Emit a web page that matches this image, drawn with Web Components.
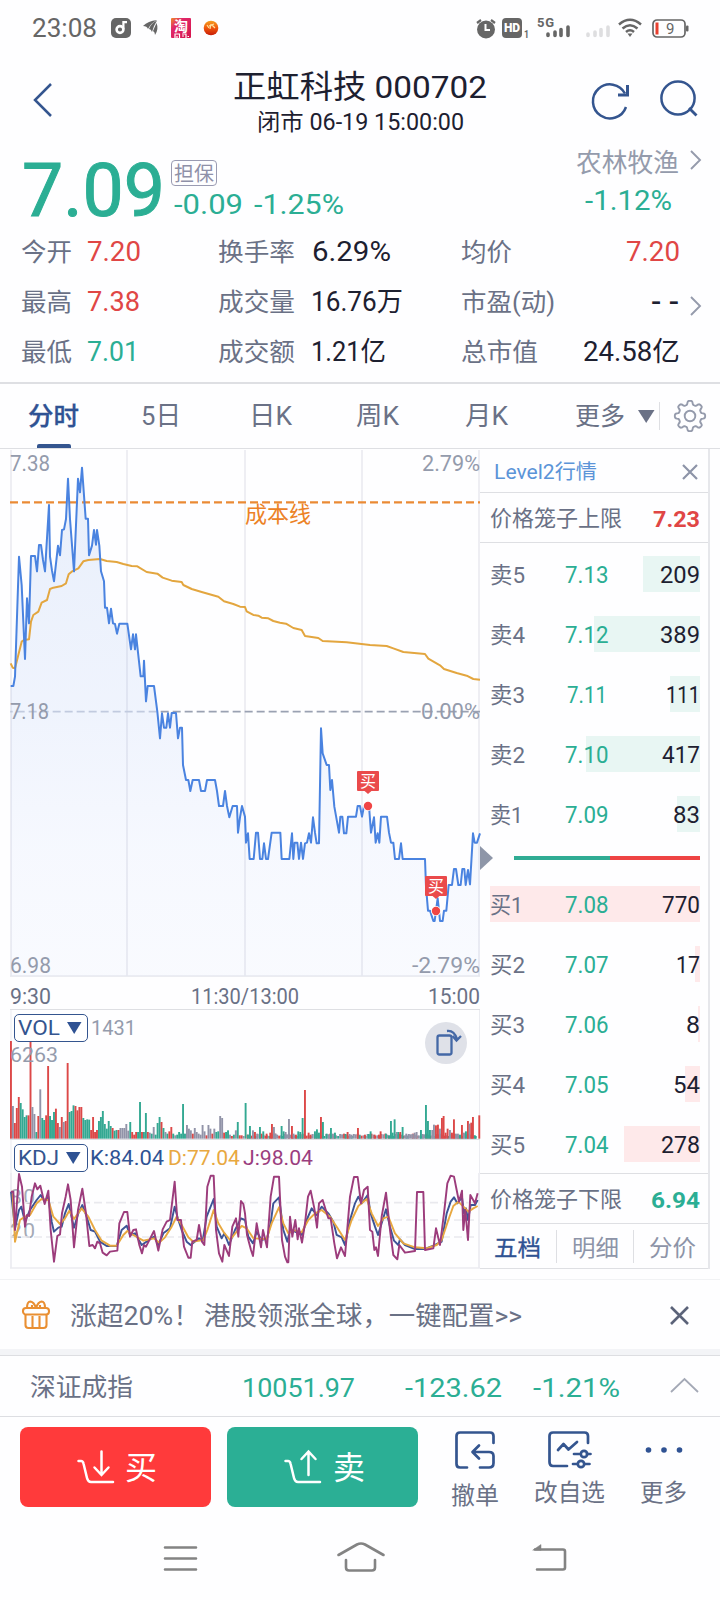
<!DOCTYPE html>
<html lang="zh-CN">
<head>
<meta charset="utf-8">
<title>正虹科技 000702</title>
<style>
html,body{margin:0;padding:0;background:#fefeff}
body{width:720px;height:1600px;overflow:hidden;font-family:Roboto,"Noto Sans CJK SC",sans-serif;color:#1d2030}
</style>
</head>
<body>
<stock-app></stock-app>
<script>
const define = (name, html, setup) => {
  const tpl = document.createElement('template');
  tpl.innerHTML = `<style>*{box-sizing:border-box}:host{display:flex;box-sizing:border-box}svg{display:block;flex:none;overflow:visible}.row{display:flex;align-items:center}.g{color:#2bae94}.r{color:#e04645}.l{color:#949bac}.b{color:#2f5293}.sp{flex:1}</style>` + html;
  customElements.define(name, class extends HTMLElement {
    connectedCallback() {
      if (this.shadowRoot) return;
      const root = this.attachShadow({mode: 'open'});
      root.appendChild(tpl.content.cloneNode(true));
      if (setup) setup(root, this);
    }
  });
};

/* Single line of text stretched to an exact width: s = font size, w = width */
customElements.define('fit-text', class extends HTMLElement {
  connectedCallback() {
    if (this.shadowRoot) return;
    const root = this.attachShadow({mode: 'open'});
    const s = +this.getAttribute('s'), w = +this.getAttribute('w');
    root.innerHTML = `<style>:host{display:block;flex:none;width:${w}px;height:${s}px;font-size:${s}px;line-height:${s}px}span{display:inline-block;white-space:nowrap;transform-origin:0 50%}</style><span><slot></slot></span>`;
    const span = root.querySelector('span');
    const nat = span.getBoundingClientRect().width;
    if (nat) span.style.transform = `scaleX(${w / nat})`;
  }
});

define('status-bar', `<style>:host{height:56px;align-items:center;padding-left:32px;color:#666}
.hd{width:20px;height:20px;background:#666;border-radius:4px;color:#fff;font:900 12px/20px Roboto;text-align:center}
</style>
<fit-text s="25" w="65">23:08</fit-text>
<svg style="margin-left:14px" width="20" height="20"><rect width="20" height="20" rx="5" fill="#666"/><circle cx="9" cy="11.5" r="3.4" fill="none" stroke="#fff" stroke-width="2.6"/><path d="M12.4 11V4.2H16" fill="none" stroke="#fff" stroke-width="2.2"/></svg>
<svg style="margin-left:12px" width="16" height="18"><path d="M0 7Q5 2 14 1Q8 4 5 10Q4 7 0 7ZM6 10Q8 4 14 1.500Q11 6 9 13Q8 10 6 10ZM10 12L13.500 4Q16 10 12 16Q12 13 10 12Z" fill="#666"/></svg>
<svg style="margin-left:12px" width="20" height="20"><defs><linearGradient id="t" x2="1" y2="1"><stop stop-color="#f08a2a"/><stop offset=".3" stop-color="#e0286a"/><stop offset="1" stop-color="#d6144c"/></linearGradient></defs><rect width="20" height="20" rx="1" fill="url(#t)"/><text x="3" y="12.500" font-family="Noto Sans CJK SC" font-weight="700" font-size="14" fill="#fff">淘</text><path d="M4 20V16H8.500V20M6 18V20M11 16H15V20M11 18H13M16.500 18.500H18" stroke="#fff" stroke-width="1.200" fill="none"/></svg>
<svg style="margin-left:12px" width="16" height="16"><defs><linearGradient id="o" x2="0" y2="1"><stop stop-color="#f5a020"/><stop offset=".5" stop-color="#f0560c"/><stop offset="1" stop-color="#c61c08"/></linearGradient></defs><circle cx="8" cy="8" r="7.300" fill="url(#o)"/><path d="M4 5L6 8M8 4L7 9M6 6L11 4M9 5L12 8" stroke="#ffe2a0" fill="none" stroke-width="1.2"/></svg>
<div class="sp"></div>
<svg width="20" height="21"><circle cx="10" cy="11.500" r="9" fill="#666"/><path d="M9.500 6V12H14" stroke="#fff" stroke-width="2" fill="none"/><path d="M1 5L5 2M19 5L15 2" stroke="#666" stroke-width="2.200"/></svg>
<div class="hd" style="margin-left:6px">HD</div>
<fit-text s="11" w="5" style="margin:12px 9px 0 2px;font-weight:700">1</fit-text>
<svg width="32" height="22"><text x="-1" y="10" font-family="Roboto" font-weight="700" font-size="13" fill="#666" textLength="17">5G</text><g stroke="#666" stroke-width="3.600" stroke-linecap="round"><path d="M10 17V18.500M17 15V18.500M23 12.500V18.500M30 10V18.500"/></g></svg>
<svg style="margin-left:16px" width="24" height="22"><g stroke="#dedee0" stroke-width="3.600" stroke-linecap="round"><path d="M2 17V18.500M9 15V18.500M15 12.500V18.500M22 10V18.500"/></g></svg>
<svg style="margin-left:8px" width="24" height="20"><g fill="none" stroke="#666" stroke-width="2.500"><path d="M1 6.500Q12-3 23 6.500M4.500 10.500Q12 4 19.500 10.500M8 14Q12 10.500 16 14"/></g><path d="M9.500 15.500H14.500L12 19Z" fill="#666"/></svg>
<svg style="margin:1px 31px 0 10px" width="37" height="19"><rect x="1" y="1" width="32" height="17" rx="4" fill="none" stroke="#666" stroke-width="1.700"/><rect x="3.500" y="3.500" width="3" height="12" fill="#e8402f"/><rect x="34" y="6.500" width="2.500" height="6" rx="1" fill="#666"/><text x="14" y="15" font-family="Roboto" font-size="15" fill="#666">9</text></svg>`);

define('stock-header', `<style>:host{height:87px;align-items:flex-start}
.mid{display:flex;flex-direction:column;align-items:center;gap:7px;padding:15px 10px 0 0;flex:1}
</style>
<svg style="margin:27px 0 0 33px" width="20" height="34"><path d="M18 1L2 17L18 33" fill="none" stroke="#34558f" stroke-width="2.500"/></svg>
<div style="width:84px"></div>
<div class="mid"><fit-text s="32" w="254">正虹科技 000702</fit-text><fit-text s="23" w="207" style="margin:1px 0 0 1px">闭市 06-19 15:00:00</fit-text></div>
<svg style="margin:25px 0 0" width="37" height="38"><g fill="none" stroke="#34558f" stroke-width="2.500"><path d="M34 26A17 17 0 1 1 33 12.500"/><path d="M35.500 4V14H26" stroke-width="3"/></g></svg>
<svg style="margin:24px 22px 0 31px" width="38" height="38"><circle cx="18" cy="18" r="16.600" fill="none" stroke="#34558f" stroke-width="2.500"/><path d="M29 28L36.500 35.500" stroke="#34558f" stroke-width="2.800"/></svg>`);

define('quote-panel', `<style>:host{flex-direction:column;height:241px;border-bottom:2px solid #dedfe3;position:relative}
.top{display:flex;height:84px}.badge{display:flex;align-items:center;justify-content:center;width:46px;height:26px;border:1.500px solid #9a9bb2;border-radius:4px;color:#8f90a8}
.grid{display:grid;grid-template-columns:197px 243px 1fr;}
.f{display:flex;align-items:center;height:50px}.f>:first-child{color:#6a7186}
.ar{position:absolute;left:690px;top:154px}
</style>
<div class="top">
<fit-text class="g" s="74" w="143" style="margin:11px 0 0 22px;-webkit-text-stroke:1px #2bae94">7.09</fit-text>
<div style="margin:17px 0 0 6px"><div class="badge"><fit-text s="20" w="40" style="margin-top:1px">担保</fit-text></div>
<div class="row g" style="margin:6px 0 0 3px"><fit-text s="27" w="69">-0.09</fit-text><fit-text s="27" w="90" style="margin-left:11px">-1.25%</fit-text></div></div>
<div class="sp"></div>
<div style="width:104px;margin:7px 10px 0 0"><fit-text s="26" w="103" class="l">农林牧渔</fit-text><fit-text s="27" w="87" class="g" style="margin:12px 0 0 9px">-1.12%</fit-text></div>
<svg style="margin:8px 19px 0 0" width="11" height="18"><path d="M1 0L10 9L1 18" fill="none" stroke="#959bac" stroke-width="1.900"/></svg>
</div>
<div class="grid" style="padding-left:21px">
<div class="f"><fit-text s="25" w="51">今开</fit-text><fit-text class="r" s="27" w="54" style="margin-left:15px">7.20</fit-text></div>
<div class="f"><fit-text s="25" w="77">换手率</fit-text><fit-text s="27" w="79" style="margin-left:17px">6.29%</fit-text></div>
<div class="f"><fit-text s="25" w="51">均价</fit-text><fit-text class="r" s="27" w="54" style="margin-left:114px">7.20</fit-text></div>
<div class="f"><fit-text s="25" w="51">最高</fit-text><fit-text class="r" s="27" w="53" style="margin-left:15px">7.38</fit-text></div>
<div class="f"><fit-text s="25" w="77">成交量</fit-text><fit-text s="27" w="92" style="margin-left:16px">16.76万</fit-text></div>
<div class="f"><fit-text s="25" w="94">市盈(动)</fit-text><fit-text s="27" w="28" style="margin-left:96px;font-weight:500">- -</fit-text></div>
<div class="f"><fit-text s="25" w="51">最低</fit-text><fit-text class="g" s="27" w="52" style="margin-left:15px">7.01</fit-text></div>
<div class="f"><fit-text s="25" w="77">成交额</fit-text><fit-text s="27" w="75" style="margin-left:16px">1.21亿</fit-text></div>
<div class="f"><fit-text s="25" w="77">总市值</fit-text><fit-text s="27" w="97" style="margin-left:45px">24.58亿</fit-text></div>
</div>
<svg class="ar" width="11" height="18"><path d="M1 0L10 9L1 18" fill="none" stroke="#959bac" stroke-width="1.900"/></svg>`);

define('period-tabs', `<style>:host{height:65px;align-items:center;border-bottom:1px solid #dedfe3;color:#6a7186;position:relative;padding-left:28px}
.on{position:absolute;left:37px;bottom:0;width:34px;height:4px;border-radius:2px 2px 0 0;background:#34558f}</style>
<fit-text class="b" s="25" w="51" style="font-weight:500;-webkit-text-stroke:.3px #2f5293">分时</fit-text>
<fit-text s="26" w="40" style="margin-left:62px">5日</fit-text>
<fit-text s="26" w="43" style="margin-left:68px">日K</fit-text>
<fit-text s="26" w="43" style="margin-left:64px">周K</fit-text>
<fit-text s="26" w="43" style="margin-left:66px">月K</fit-text>
<fit-text s="25" w="50" style="margin-left:67px">更多</fit-text>
<svg style="margin-left:13px" width="17" height="13"><path d="M0 0H16.500L8.200 13Z" fill="#6a7186"/></svg>
<div style="width:1px;height:28px;background:#dedfe3;margin-left:4px"></div>
<svg style="margin-left:14px" width="32" height="32" viewBox="-16 -16 32 32"><path id="gear" fill="none" stroke="#959bac" stroke-width="1.900" stroke-linejoin="round"/><circle r="5.300" fill="none" stroke="#959bac" stroke-width="1.900"/></svg>
<div class="on"></div>`, root => {
  let d = '';
  for (let i = 0; i <= 160; i++) {
    const a = i / 160 * Math.PI * 2, c = Math.cos(a * 8);
    const r = 13.300 + 1.900 * Math.tanh(2.200 * c);
    d += (i ? 'L' : 'M') + (r * Math.sin(a)).toFixed(2) + ' ' + (-r * Math.cos(a)).toFixed(2);
  }
  root.getElementById('gear').setAttribute('d', d + 'Z');
});

const PRICE = '32,738 40,738 45,710 57,350 65,435 75,657 81,475 87,550 93,348 105,348 111,394 117,315 123,315 129,360 135,394 147,195 150,350 156,392 162,424 174,317 180,346 186,270 192,268 198,237 204,116 210,237 222,394 234,116 240,157 246,83 257,236 264,236 267,346 276,317 282,270 288,314 291,270 298,317 303,394 312,424 315,503 321,503 327,550 333,506 339,550 345,552 351,581 358,551 382,551 393,628 399,583 405,628 408,583 422,709 430,709 432,662 438,784 443,738 462,738 472,815 480,895 486,820 492,863 499,863 504,820 510,863 515,819 528,819 534,895 540,863 546,863 549,975 558,1020 565,1020 571,1053 578,1020 597,1020 603,1053 615,1053 621,1020 645,1020 651,1053 657,1098 669,1098 675,1053 681,1098 688,1132 698,1098 711,1098 714,1178 720,1132 726,1098 735,1130 738,1208 744,1180 749,1257 761,1257 768,1178 774,1178 780,1257 787,1257 792,1210 798,1257 804,1257 815,1178 841,1178 845,1257 868,1257 876,1180 880,1257 884,1208 892,1208 897,1257 903,1208 909,1257 915,1210 921,1208 927,1180 933,1208 939,1132 945,1178 950,1210 957,1210 963,865 968,940 980,975 987,975 991,1050 996,1020 1003,1100 1017,1178 1021,1130 1027,1130 1032,1180 1039,1180 1044,1130 1068,1130 1073,1098 1080,1098 1086,1130 1092,1098 1107,1098 1113,1178 1122,1132 1127,1208 1133,1180 1138,1208 1143,1130 1161,1130 1167,1178 1173,1208 1180,1208 1185,1257 1197,1257 1203,1210 1208,1257 1275,1257 1278,1340 1284,1412 1290,1412 1300,1443 1304,1443 1308,1412 1313,1375 1317,1412 1320,1443 1328,1443 1332,1412 1339,1412 1346,1335 1356,1335 1362,1287 1368,1287 1375,1335 1382,1335 1387,1287 1393,1287 1397,1335 1404,1290 1410,1333 1419,1180 1424,1208 1431,1208 1440,1180';
const AVG = '32,670 38,683 45,685 55,645 65,605 72,600 87,598 93,545 100,525 115,515 125,488 141,480 150,447 160,443 185,438 198,430 206,403 215,395 235,385 250,364 265,360 300,357 320,363 350,366 370,372 395,378 412,379 440,396 472,401 488,413 515,422 545,426 550,435 575,447 605,456 655,470 672,484 700,492 720,500 735,501 740,514 760,525 775,527 785,533 805,535 820,543 840,548 858,551 880,564 905,570 915,588 955,594 968,603 1040,607 1110,615 1160,618 1180,625 1210,636 1275,642 1285,656 1320,676 1332,687 1370,699 1400,707 1420,717 1440,719';

define('price-chart', `<style>:host{height:560px;width:480px}text{font-family:Roboto,"Noto Sans CJK SC",sans-serif;font-size:22px}</style>
<svg width="480" height="560" viewBox="0 449 480 560">
<defs><linearGradient id="f" gradientUnits="userSpaceOnUse" x1="0" y1="80" x2="0" y2="1600"><stop stop-color="#4b80dc" stop-opacity=".12"/><stop offset=".5" stop-color="#4b80e8" stop-opacity=".08"/><stop offset=".75" stop-color="#4b80f0" stop-opacity=".045"/><stop offset="1" stop-color="#4b80f0" stop-opacity=".03"/></linearGradient></defs>
<path d="M11 450V977M127 450V977M245 450V977M362 450V977M479 450V977M10 976.200H480" stroke="#ebecf1" stroke-width="1.700" fill="none"/>
<g transform="translate(0 440) scale(.33333)" fill="none">
<path d="M472 815H1440" stroke="#9aa1b2" stroke-width="5" stroke-dasharray="24 12" stroke-dashoffset="26"/><path d="M30 815H472" stroke="#ccd1de" stroke-width="5" stroke-dasharray="24 12" stroke-dashoffset="16"/>
<polygon points="32,1608 ${PRICE} 1440,1608" fill="url(#f)"/>
<polyline points="${AVG}" stroke="#e3a63f" stroke-width="6" stroke-linejoin="round"/>
<path d="M30 187H1440" stroke="#ea8a35" stroke-width="6.500" stroke-dasharray="24 12" />
<polyline points="${PRICE}" stroke="#4a83e0" stroke-width="6" stroke-linejoin="round"/></g>
<g fill="#949bac">
<text x="10" y="471" textLength="40" lengthAdjust="spacingAndGlyphs">7.38</text>
<text x="422" y="471" textLength="58" lengthAdjust="spacingAndGlyphs">2.79%</text>
<text x="10" y="719" textLength="39" lengthAdjust="spacingAndGlyphs">7.18</text>
<text x="421" y="719" textLength="59" lengthAdjust="spacingAndGlyphs">0.00%</text>
<text x="10" y="973" textLength="41" lengthAdjust="spacingAndGlyphs">6.98</text>
<text x="412" y="973" textLength="68" lengthAdjust="spacingAndGlyphs">-2.79%</text></g>
<text x="245" y="522" fill="#ec8226" textLength="66" lengthAdjust="spacingAndGlyphs">成本线</text>
<g fill="#6a7186"><text x="10" y="1004" textLength="41" lengthAdjust="spacingAndGlyphs">9:30</text>
<text x="191" y="1004" textLength="108" lengthAdjust="spacingAndGlyphs">11:30/13:00</text>
<text x="428" y="1004" textLength="52" lengthAdjust="spacingAndGlyphs">15:00</text></g>
<g><rect x="357" y="771" width="22" height="20" rx="1" fill="#ea4a4b"/><path d="M364 790.500H372L368 794Z" fill="#ea4a4b"/><circle cx="368" cy="806" r="5" fill="#fff"/><circle cx="368" cy="806" r="4.200" fill="#f04545"/><text x="360" y="787" fill="#fff" style="font-size:16px">买</text></g>
<g><rect x="425" y="876" width="22" height="20" rx="1" fill="#ea4a4b"/><path d="M432 895.500H440L436 899Z" fill="#ea4a4b"/><circle cx="436" cy="911" r="5" fill="#fff"/><circle cx="436" cy="911" r="4.200" fill="#f04545"/><text x="428" y="892" fill="#fff" style="font-size:16px">买</text></g>
</svg>`);

define('indicator-picker', `<style>:host{width:74px;height:28px;border:1.500px solid #34558f;border-radius:5px;align-items:center;padding-left:3px;color:#34558f;background:#fff;flex:none}</style>
<slot></slot><svg style="margin-left:7px" width="15" height="12"><path d="M0 0H14.500L7.200 12Z" fill="#2f5293"/></svg>`);

define('volume-chart', `<style>:host{height:131px;width:480px;flex-direction:column;position:relative}
.plot{position:absolute;left:0;top:0}.head{display:flex;align-items:center;padding:4px 0 0 14px;height:33px;position:relative}
.max{position:relative}
.rot{position:absolute;left:425px;top:13px}</style>
<svg class="plot" width="480" height="131" viewBox="0 1009 480 131"><path d="M10 1009.500H480" stroke="#dedfe3"/><path d="M11 1010V1173M479.500 1010V1173" stroke="#ebecf1"/><path d="M10 1139.500H480" stroke="#dedfe3" stroke-width="1"/><g id="bars" transform="translate(0 1000) scale(.33333)"></g></svg>
<div class="head"><indicator-picker><fit-text s="21" w="42" style="margin-top:1px">VOL</fit-text></indicator-picker><fit-text class="l" s="21" w="45" style="margin:1px 0 0 3px">1431</fit-text></div>
<fit-text class="l max" s="21" w="48" style="margin:3px 0 0 10px">6263</fit-text>
<svg class="rot" width="42" height="42"><circle cx="21" cy="21" r="21" fill="#dfe1e8"/><rect x="12.500" y="13.500" width="14" height="19" rx="2" fill="none" stroke="#4468a6" stroke-width="2.300"/><path d="M22 9Q29 8 32 17M27.500 14L31.500 18.500L36 14" fill="none" stroke="#4468a6" stroke-width="2.300"/></svg>`, root => {
  const first = '293r 98y 47r 92r 125r 107g 88g 65g 70g 70r 290r 95y 74y 20g 68r 148y 62g 56g 70r 218r 68g 56g 80g 90r 47r 35y 65r 50y 53r 227r 80g 83g 100g 98r 85r 95r 95r 62g 56g 58g 57g 26r 65r 20r 26r 53g 65g 83g 44g 30g 53g 38g 32r 24g 26g 26r 32y 32y 32y 44y 24y 50g 20r 12r 20r 20g 110g 20r 20g 77g 20r 18y 15g 35y 12g 47g 65g 50r 32g 20y 15g 22r 35r 15g 10y 12g 20g 15g 104g 15g 41y 30y 25y 15r 32y 20y 15y 12y 41y 22y 10r 41y 30y 15r 30y 20g 22g 68y 62y 18r 20g 25g 12y 8r 12g 25y 50g 10r 10r 8y 107g 12r'.split(' ');
  const later = '24:12g 30:38g 39:25y 45:20r 52:15y 60:35g 70:22g 80:15r 91:18r 96:44r 102:35y 107:15y 125:38g 131:22g 137:20y 147:59y 156:38r 161:15y 168:12r 175:22g 181:20g 188:62g 195:146r 206:18r 212:12r 225:22g 231:28g 237:18g 243:65r 249:50g 260:15g 267:12y 273:32g 279:15y 285:18g 317:14g 323:20r 329:14y 335:12y 354:32r 359:10g 375:12r 386:14g 392:22g 404:12r 417:12r 422:22r 438:15g 447:10g 453:53g 458:18g 464:58g 470:20y 475:20g 481:20r 488:35g 499:15y 505:12y 518:14y 524:18y 530:20y 543:26g 549:12y 558:101g 564:53g 570:26g 577:26y 582:42y 588:40r 594:42r 600:30y 606:62r 611:68r 617:18r 623:30r 630:26y 636:18r 642:58r 648:15y 654:15y 660:12g 666:41r 672:18y 678:22g 684:53r 689:45y 694:48r 699:65r 705:10g 718:70r'.split(' ');
  const col = {r: '#dc4848', g: '#33a892', y: '#9193a8'};
  const rect = (x, h, c) => `<rect x="${(x - 3).toFixed(1)}" y="${416 - h}" width="5.700" height="${h}" fill="${col[c]}"/>`;
  let s = '';
  const step = 704 / (first.length - 2);
  first.forEach((v, i) => s += rect(33 + i * step, parseInt(v), v.slice(-1)));
  const hs = [12, 8, 15, 10, 13, 9, 14], cs = 'yrygyyr';
  for (let i = 0; i < 116; i++) s += rect(749 + i * 5.900, hs[i * 5 % 7], cs[i % 7]);
  later.forEach(v => { const [x, h] = v.split(':'); s += rect(720 + +x, parseInt(h), h.slice(-1)); });
  root.getElementById('bars').innerHTML = s;
});

define('kdj-chart', `<style>:host{height:129px;width:480px;flex-direction:column;position:relative}
.plot{position:absolute;left:0;top:0}.head{display:flex;align-items:center;padding:1px 0 0 14px;position:relative;height:34px}
text{font:21px Roboto}</style>
<svg class="plot" width="480" height="129" viewBox="0 1140 480 129">
<path d="M11 1173V1268M479 1173V1268M10 1268H480" stroke="#ebecf1" stroke-width="1.700"/>
<g fill="#a4a9b6"><text x="10" y="1204" textLength="25">80</text><text x="10" y="1238" textLength="25">20</text></g>
<g transform="translate(0 1000) scale(.33333)" fill="none" stroke-width="5.800" stroke-linejoin="round">
<path d="M30 608H1435M30 660H1435M30 711H1435" stroke="#e9e9ee" stroke-width="5" stroke-dasharray="24 12"/>
<polyline stroke="#3c5496" points="33,575 45,685 57,630 64,620 75,665 90,630 110,600 122,585 134,605 145,590 155,665 162,695 175,683 185,680 195,640 206,612 222,683 235,640 247,615 260,650 272,690 285,695 300,725 320,738 350,738 365,690 380,677 390,705 405,700 425,735 462,710 475,735 490,700 510,685 524,620 535,660 545,690 560,725 572,735 597,715 608,722 620,650 641,597 650,680 665,715 673,700 687,735 705,690 723,655 735,660 745,710 759,730 770,695 785,720 801,715 812,670 820,610 837,592 850,690 862,725 870,690 885,695 906,705 920,660 935,625 950,645 965,620 985,640 1000,665 1010,705 1025,712 1035,735 1050,660 1065,610 1075,590 1085,610 1103,585 1112,640 1125,680 1134,705 1145,670 1158,628 1170,680 1182,722 1195,735 1200,718 1215,735 1245,747 1275,747 1300,737 1325,725 1340,640 1352,605 1362,592 1372,610 1386,592 1392,640 1398,625 1404,660 1412,615 1425,615 1433,600"/>
<polyline stroke="#e8a840" points="38,580 45,725 60,660 75,650 90,645 110,610 125,597 145,600 160,650 180,672 195,655 208,632 222,657 245,625 265,650 285,690 305,722 330,737 350,737 370,705 382,693 400,705 430,722 462,715 478,728 495,712 515,680 530,650 545,675 565,712 580,725 610,720 622,690 641,630 655,670 672,698 690,720 710,695 725,678 740,685 760,715 800,717 815,670 837,622 850,670 865,700 880,690 905,697 925,660 945,640 965,630 990,650 1010,680 1035,720 1055,660 1075,618 1100,597 1115,640 1134,678 1150,655 1165,650 1185,700 1210,730 1245,742 1280,745 1310,735 1325,720 1345,660 1360,618 1375,605 1390,620 1405,635 1420,625 1433,618"/>
<polyline stroke="#9c3c7c" points="33,575 40,575 45,690 57,522 66,560 75,680 81,645 87,648 95,590 105,550 112,568 121,557 134,612 145,572 152,690 162,785 172,708 180,703 186,640 197,590 204,553 212,600 222,742 234,630 247,566 258,640 268,738 278,735 285,745 292,725 300,730 308,758 320,766 330,755 352,752 358,670 372,636 382,636 390,710 400,690 408,688 418,735 426,760 432,735 438,740 462,693 475,752 488,688 500,665 510,660 524,545 532,660 543,660 552,740 565,773 572,773 577,725 590,720 597,675 606,725 613,735 622,560 632,527 641,527 648,690 657,760 667,785 673,735 687,768 697,680 708,655 715,710 723,603 730,612 735,640 741,705 753,750 759,768 770,670 783,742 789,690 801,742 812,590 822,530 837,530 846,720 855,770 862,787 865,787 870,650 877,710 886,660 893,718 897,685 906,728 915,670 924,590 932,572 943,625 951,683 957,610 968,600 985,655 992,655 1003,730 1011,775 1023,742 1035,768 1050,590 1062,531 1073,531 1083,610 1092,570 1103,560 1110,690 1117,695 1123,750 1128,742 1134,768 1145,650 1158,578 1170,690 1180,765 1192,778 1198,735 1215,758 1245,753 1251,576 1270,576 1275,750 1300,745 1308,685 1320,735 1332,640 1342,550 1352,527 1362,530 1370,570 1377,605 1386,572 1390,690 1396,630 1404,720 1411,585 1425,610 1433,580"/></g>
</svg>
<div class="head"><indicator-picker><fit-text s="21" w="41" style="margin-top:1px">KDJ</fit-text></indicator-picker>
<fit-text s="21" w="74" class="b" style="margin:1px 0 0 2px">K:84.04</fit-text><fit-text s="21" w="72" style="margin:1px 0 0 4px;color:#e8a840">D:77.04</fit-text><fit-text s="21" w="70" style="margin:1px 0 0 3px;color:#9a3d7e">J:98.04</fit-text></div>`);

/* One price level. bar = depth bar width, qw = quantity text width */
define('book-row', `<style>:host{height:60px;align-items:flex-start;position:relative;color:#6a7186;padding:2px 0 0 10px}
.bar{position:absolute;right:8px;top:11px;height:36px}fit-text{position:relative}</style><div class="bar"></div><div id="c" class="row" style="flex:1;height:56px"></div>`, (root, el) => {
  const a = n => el.getAttribute(n);
  const bar = root.querySelector('.bar');
  bar.style.width = a('bar') + 'px';
  bar.style.background = a('side') === 'sell' ? '#e8f6f3' : '#fee9ea';
  const one = /1$/.test(a('name'));
  root.getElementById('c').innerHTML = `<fit-text s="22.500" w="${one ? 33 : 35}">${a('name')}</fit-text><div style="width:74px;margin-left:${one ? 27 : 25}px;display:flex;justify-content:center"><fit-text class="g" s="23" w="${a('price') === '7.11' ? 40 : 43.500}">${a('price')}</fit-text></div><div class="sp"></div><fit-text s="23" w="${a('qw')}" style="color:#1d2030;margin-right:8px">${a('qty')}</fit-text>`;
});

define('order-book', `<style>:host{width:230px;height:820px;flex-direction:column;border-right:2px solid #e6e7eb;position:relative}
.line{border-bottom:1px solid #dedfe3}.cage{display:flex;align-items:center;padding:3px 0 0 10px;color:#6a7186}
.split{display:flex;height:4px;margin:11px 8px 0 34px}.split i{width:96px;background:#30ac94}.split b{flex:1;background:#ee4444}
.tri{position:absolute;left:0;top:397px}.tabs{display:flex;align-items:center;height:45px;color:#8d94a8;position:relative}
.tabs i{width:1px;height:33px;background:#dedfe3}.tabs fit-text{margin-top:4px}</style>
<div class="line row" style="height:44px;padding-left:14px"><fit-text s="20" w="103" style="color:#5b94d8;margin-top:2px">Level2行情</fit-text><div class="sp"></div><svg style="margin:2px 10px 0 0" width="16" height="14"><path d="M1 0L15 14M15 0L1 14" stroke="#8d94a8" stroke-width="2.200"/></svg></div>
<div class="line cage" style="height:50px"><fit-text s="22" w="132">价格笼子上限</fit-text><fit-text class="r" s="22" w="47" style="font-weight:700;margin:1px 0 0 31px">7.23</fit-text></div>
<div style="height:2px"></div>
<book-row side="sell" name="卖5" price="7.13" qty="209" bar="57" qw="40"></book-row>
<book-row side="sell" name="卖4" price="7.12" qty="389" bar="106" qw="40"></book-row>
<book-row side="sell" name="卖3" price="7.11" qty="111" bar="30" qw="34"></book-row>
<book-row side="sell" name="卖2" price="7.10" qty="417" bar="114" qw="38"></book-row>
<book-row side="sell" name="卖1" price="7.09" qty="83" bar="23" qw="27"></book-row>
<div class="split"><i></i><b></b></div>
<div style="height:15px"></div>
<book-row side="buy" name="买1" price="7.08" qty="770" bar="210" qw="38"></book-row>
<book-row side="buy" name="买2" price="7.07" qty="17" bar="5" qw="24"></book-row>
<book-row side="buy" name="买3" price="7.06" qty="8" bar="2" qw="14"></book-row>
<book-row side="buy" name="买4" price="7.05" qty="54" bar="15" qw="27"></book-row>
<book-row side="buy" name="买5" price="7.04" qty="278" bar="76" qw="39"></book-row>
<div class="cage line" style="height:51px;margin-top:-2px;border-top:1px solid #dedfe3"><fit-text s="22" w="132">价格笼子下限</fit-text><fit-text class="g" s="22" w="49" style="font-weight:700;margin:1px 0 0 29px">6.94</fit-text></div>
<div class="tabs line"><fit-text s="23" w="47" class="b" style="margin-left:14px;-webkit-text-stroke:.3px #2f5293">五档</fit-text><i style="margin-left:15px"></i><fit-text s="23" w="47" style="margin-left:15px">明细</fit-text><i style="margin-left:14px"></i><fit-text s="23" w="47" style="margin-left:15px">分价</fit-text></div>
<svg class="tri" width="13" height="24"><path d="M0 0L13 12L0 24Z" fill="#8e96a8"/></svg>`);

define('promo-banner', `<style>:host{height:76px;margin-top:10px;border-top:1px solid #f1f2f4;border-bottom:6px solid #f3f4f7;align-items:center;padding-left:22px;color:#6a7186}</style>
<svg width="28" height="29"><g fill="none" stroke="#e98f33" stroke-width="2.100" stroke-linejoin="round"><rect x="1" y="8" width="26" height="6.500" rx="3"/><path d="M3.500 14.500V25Q3.500 28 6.500 28H21.500Q24.500 28 24.500 25V14.500M10.500 16V27M17.500 16V27M5 8Q5 1.500 8.500 1.500Q12 2 14 8Q16 2 19.500 1.500Q23 1.500 23 8M10 8V5M18 8V5"/></g></svg>
<fit-text s="26" w="130" style="margin:2px 0 0 20px">涨超20%！</fit-text><fit-text s="26" w="318" style="margin:2px 0 0 4px">港股领涨全球，一键配置&gt;&gt;</fit-text><div class="sp"></div>
<svg style="margin:2px 31px 0 0" width="19" height="19"><path d="M1 1L18 18M18 1L1 18" stroke="#5b6379" stroke-width="2.600"/></svg>`);

define('index-row', `<style>:host{height:62px;border-top:1.500px solid #dddee2;border-bottom:1.500px solid #dddee2;align-items:center;color:#2bae94}fit-text{margin-top:3px}</style>
<fit-text s="25.500" w="103" style="margin-left:30px;color:#6a7186">深证成指</fit-text>
<fit-text s="26" w="113" style="margin-left:109px">10051.97</fit-text><fit-text s="26" w="97" style="margin-left:50px">-123.62</fit-text><fit-text s="26" w="87" style="margin-left:31px">-1.21%</fit-text>
<svg style="margin-left:50px;margin-top:-1px" width="29" height="15"><path d="M1 14L14.500 1L28 14" fill="none" stroke="#a4a9b6" stroke-width="1.800"/></svg>`);

define('action-bar', `<style>:host{height:112px;padding:10px 0 0 20px;align-items:flex-start;color:#6a7186}
.btn{display:flex;align-items:center;width:191px;height:80px;border-radius:8px;color:#fff;padding-left:57px}
.it{display:flex;flex-direction:column;align-items:center;padding-top:4px}svg{fill:none}</style>
<div class="btn" style="background:#ff3a3b"><svg width="38" height="34"><g stroke="#fff" stroke-width="2.500" stroke-linecap="round"><path d="M1.500 11H4Q6 11 6.500 13.500L10 28Q11 32 14 32H36"/><path d="M24.500 1.500V24M17.500 17.500L24.500 25L31.500 17.500"/></g></svg><fit-text s="32" w="32" style="margin:2px 0 0 10px">买</fit-text></div>
<div class="btn" style="background:#2baf95;margin-left:16px"><svg width="38" height="34"><g stroke="#fff" stroke-width="2.500" stroke-linecap="round"><path d="M1.500 11H4Q6 11 6.500 13.500L10 28Q11 32 14 32H36"/><path d="M24.500 25V2.500M17.500 9L24.500 1.500L31.500 9"/></g></svg><fit-text s="32" w="32" style="margin:2px 0 0 11px">卖</fit-text></div>
<div class="it" style="margin-left:33px"><svg width="40" height="38"><g stroke="#34558f" stroke-width="2.700" stroke-linecap="round" stroke-linejoin="round"><path d="M38.500 12V5Q38.500 1.500 35 1.500H5Q1.500 1.500 1.500 5V33Q1.500 36.500 5 36.500H12M25 36.500H34Q38.500 36.500 38.500 32V25Q38.500 21 34 21H18M24 14.500L17.500 21L24 27.500"/></g></svg><fit-text s="23.500" w="48" style="margin-top:16px">撤单</fit-text></div>
<div class="it" style="margin-left:35px"><svg width="43" height="38"><g stroke="#34558f" stroke-width="2.700" stroke-linecap="round" stroke-linejoin="round"><path d="M40 12V5Q40 1.500 36.500 1.500H5Q1.500 1.500 1.500 5V31Q1.500 35 5 35H19M10 19L15.500 13L20.500 18.500L29 11M26 23H31M39 23H42.500M25 33H29M37 33H41.500"/><circle cx="36" cy="23" r="3.200"/><circle cx="33" cy="33" r="3.200"/></g></svg><fit-text s="23.500" w="71" style="margin-top:13px">改自选</fit-text></div>
<div class="it" style="margin-left:35px"><svg width="38" height="38"><g fill="#2f5293"><circle cx="3.500" cy="19" r="2.800"/><circle cx="19" cy="19" r="2.800"/><circle cx="34.500" cy="19" r="2.800"/></g></svg><fit-text s="23.500" w="47" style="margin-top:13px">更多</fit-text></div>`);

define('nav-bar', `<style>:host{height:71px;align-items:flex-start;padding:13px 0 0 163px}svg{fill:none;stroke:#838383;stroke-width:2.600;stroke-linecap:round;stroke-linejoin:round}</style>
<svg width="34" height="30"><path d="M2 5.500H33M2 16.500H33M2 27.500H33"/></svg>
<svg style="margin-left:140px" width="48" height="30"><path d="M1.500 13L20 2.500Q24 .500 28 2.500L46.500 13M9 18V25.500Q9 28.500 12 28.500H35Q38 28.500 38 25.500V18"/></svg>
<svg style="margin-left:147px" width="36" height="30"><path d="M3 7.500H31Q33 7.500 33 9.500V25.500Q33 27.500 31 27.500H5"/><path d="M1 8L9 2.500V8Z" fill="#838383" stroke-width=".500"/></svg>`);

define('stock-app', `<style>:host{flex-direction:column;width:720px;height:1600px}.main{display:flex;height:820px}.charts{display:flex;flex-direction:column;width:480px}</style>
<status-bar></status-bar><stock-header></stock-header><quote-panel></quote-panel><period-tabs></period-tabs>
<div class="main"><div class="charts"><price-chart></price-chart><volume-chart></volume-chart><kdj-chart></kdj-chart></div><order-book></order-book></div>
<promo-banner></promo-banner><index-row></index-row><action-bar></action-bar><nav-bar></nav-bar>`);
</script>
</body>
</html>
